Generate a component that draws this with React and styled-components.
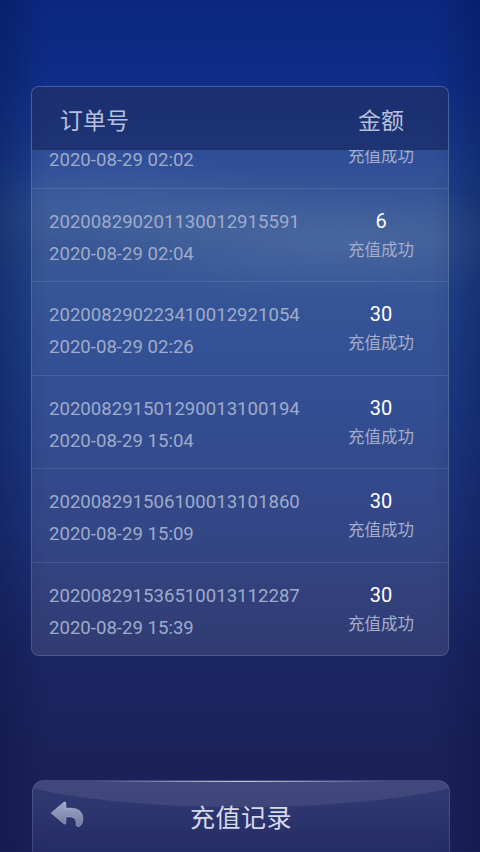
import styled, { createGlobalStyle } from 'styled-components';

const GlobalStyle = createGlobalStyle`
  html, body {
    margin: 0;
    padding: 0;
    background: #1b2158;
  }
  #root {
    height: 852px;
  }
`;

const records = [
  { id: '202008290200010012913320', time: '2020-08-29 02:02', amount: 6 },
  { id: '202008290201130012915591', time: '2020-08-29 02:04', amount: 6 },
  { id: '202008290223410012921054', time: '2020-08-29 02:26', amount: 30 },
  { id: '202008291501290013100194', time: '2020-08-29 15:04', amount: 30 },
  { id: '202008291506100013101860', time: '2020-08-29 15:09', amount: 30 },
  { id: '202008291536510013112287', time: '2020-08-29 15:39', amount: 30 },
];

const Screen = styled.div`
  height: 852px;
  display: flex;
  flex-direction: column;
  padding-top: 86px;
  box-sizing: border-box;
  overflow: hidden;
  font-family: Roboto, 'Noto Sans CJK SC', sans-serif;
  background:
    linear-gradient(90deg, rgba(6, 14, 60, 0.3) 0%, rgba(6, 14, 60, 0) 10%, rgba(6, 14, 60, 0) 90%, rgba(6, 14, 60, 0.3) 100%),
    radial-gradient(ellipse 240px 60px at 330px 240px, rgba(120, 150, 190, 0.2), rgba(120, 150, 190, 0)),
    radial-gradient(ellipse 200px 45px at 120px 205px, rgba(110, 140, 190, 0.14), rgba(110, 140, 190, 0)),
    linear-gradient(180deg, #0b2780 0%, #0f2e87 10%, #1a3d8d 20%, #244689 27%, #1f418b 36%, #1c3a86 48%, #1c3279 62%, #1a2765 75%, #1a2259 88%, #1b2158 100%);
`;

const Card = styled.div`
  margin: 0 31px;
  height: 570px;
  display: flex;
  flex-direction: column;
  border: 1px solid rgba(255, 255, 255, 0.14);
  border-radius: 8px;
  background: rgba(255, 255, 255, 0.1);
  overflow: hidden;
  box-sizing: border-box;
`;

const Columns = styled.div`
  display: grid;
  grid-template-columns: 1fr 134px;
  align-items: center;
`;

const Header = styled(Columns)`
  height: 63px;
  flex-shrink: 0;
  background: rgba(12, 22, 70, 0.45);
  color: #b6c0db;
  font-size: 23px;
  padding-left: 28px;
`;

const HeaderAmount = styled.div`
  text-align: center;
`;

const Viewport = styled.div`
  flex: 1;
  display: flex;
  flex-direction: column;
  justify-content: flex-end;
  overflow: hidden;
`;

const Row = styled(Columns)`
  height: 93.5px;
  flex-shrink: 0;
  box-sizing: border-box;
  align-items: start;
  padding: 20px 0 0 17px;
  border-top: 1px solid rgba(255, 255, 255, 0.1);
`;

const OrderInfo = styled.div`
  display: flex;
  flex-direction: column;
  gap: 6px;
  color: #9eabcb;
  font-size: 18.6px;
  line-height: 26px;
`;

const AmountInfo = styled.div`
  display: flex;
  flex-direction: column;
  align-items: center;
  gap: 5px;
`;

const Amount = styled.div`
  color: #ffffff;
  font-size: 20px;
  line-height: 24px;
`;

const Status = styled.div`
  color: #a2aecb;
  font-size: 16.5px;
  line-height: 26px;
`;

const BottomBar = styled.div`
  position: relative;
  margin: auto 30px 0 32px;
  height: 72px;
  display: flex;
  align-items: center;
  justify-content: center;
  padding-bottom: 2px;
  box-sizing: border-box;
  border: 1px solid rgba(255, 255, 255, 0.14);
  border-bottom: none;
  border-radius: 12px 12px 0 0;
  background: linear-gradient(180deg, rgba(110, 120, 180, 0.3), rgba(80, 92, 160, 0.2));
  overflow: hidden;

  &::before {
    content: '';
    position: absolute;
    left: -10%;
    right: -10%;
    top: -60px;
    height: 86px;
    border-radius: 50%;
    background: linear-gradient(180deg, rgba(255, 255, 255, 0.03), rgba(255, 255, 255, 0.08));
  }

  &::after {
    content: '';
    position: absolute;
    left: 15%;
    right: 15%;
    top: 0;
    height: 1px;
    background: linear-gradient(90deg, rgba(255, 255, 255, 0), rgba(255, 255, 255, 0.7), rgba(255, 255, 255, 0));
  }
`;

const BackButton = styled.button`
  position: absolute;
  left: 16px;
  top: 18px;
  width: 38px;
  height: 32px;
  padding: 0;
  border: none;
  background: none;
  z-index: 1;
`;

const Title = styled.div`
  position: relative;
  z-index: 1;
  color: #d5d9ec;
  font-size: 25px;
  letter-spacing: 0.5px;
`;

const BackIcon = () => (
  <svg width="38" height="32" viewBox="0 0 38 32">
    <defs>
      <linearGradient id="arrowFill" x1="0" y1="0" x2="0" y2="1">
        <stop offset="0" stopColor="#a3abcb" />
        <stop offset="1" stopColor="#6f779f" />
      </linearGradient>
    </defs>
    <path
      d="M2 14 L15 3 Q17 2 17 5 L17 9 L22 9 Q33 9 34 19 Q34 25 31 27 Q28 29 27 26 Q28 19 22 18 L17 18 L17 23 Q17 26 15 25 Z"
      fill="url(#arrowFill)"
      stroke="rgba(220,225,240,0.3)"
      strokeWidth="1"
      strokeLinejoin="round"
    />
  </svg>
);

export default function App() {
  return (
    <>
      <GlobalStyle />
      <Screen>
        <Card>
          <Header>
            <div>订单号</div>
            <HeaderAmount>金额</HeaderAmount>
          </Header>
          <Viewport>
            {records.map((r) => (
              <Row key={r.id}>
                <OrderInfo>
                  <div>{r.id}</div>
                  <div>{r.time}</div>
                </OrderInfo>
                <AmountInfo>
                  <Amount>{r.amount}</Amount>
                  <Status>充值成功</Status>
                </AmountInfo>
              </Row>
            ))}
          </Viewport>
        </Card>
        <BottomBar>
          <BackButton>
            <BackIcon />
          </BackButton>
          <Title>充值记录</Title>
        </BottomBar>
      </Screen>
    </>
  );
}
